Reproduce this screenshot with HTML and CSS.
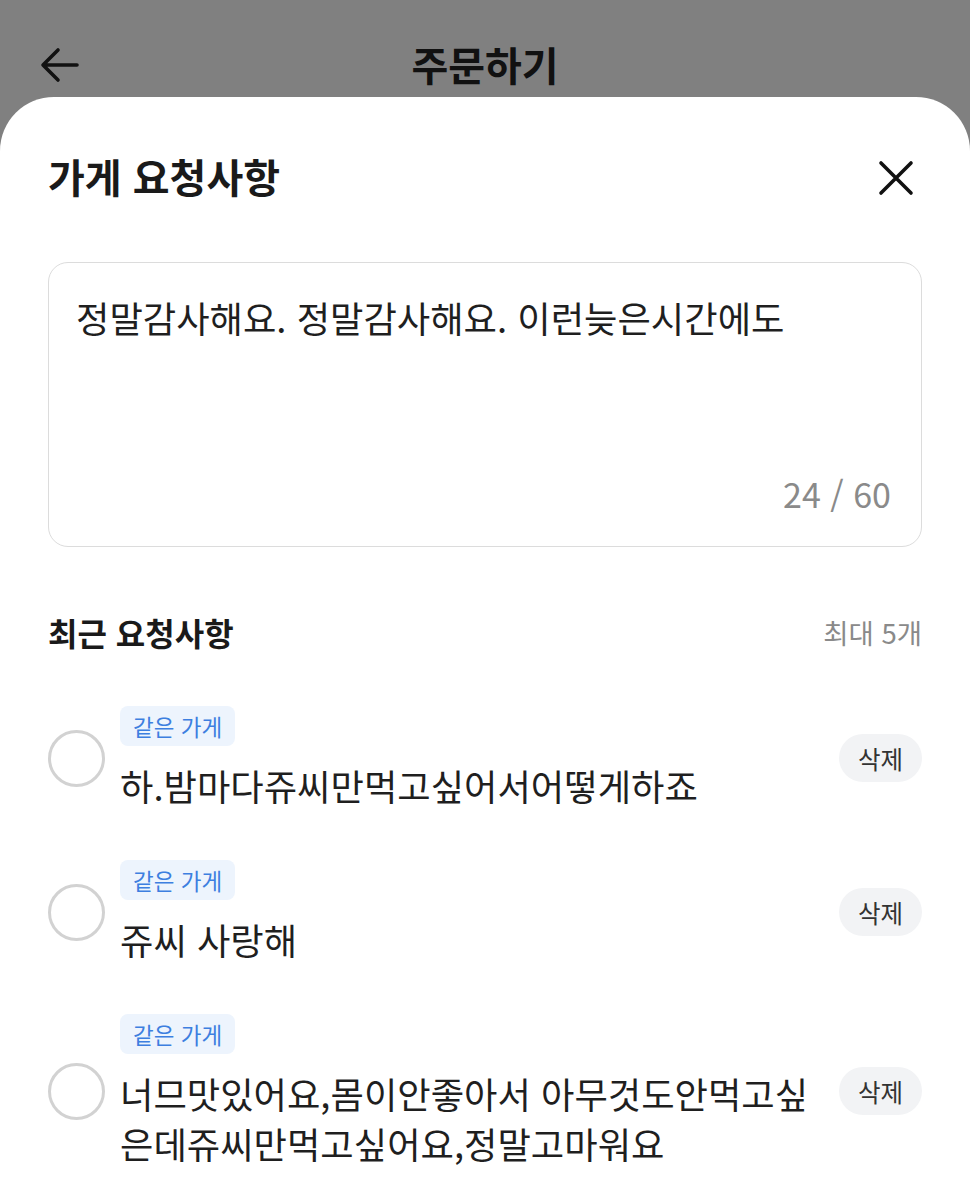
FILE: index.html
```html
<!DOCTYPE html>
<html lang="ko">
<head>
  <meta charset="UTF-8" />
  <meta name="viewport" content="width=device-width, initial-scale=1.0"/>
  <title>주문하기</title>
  <link rel="stylesheet" href="styles.css">
</head>
<body>
  <header class="top-bar">
    <button class="icon-button back">
      <svg width="40" height="36" viewBox="0 0 40 36" fill="none" stroke="#111" stroke-width="3.6" stroke-linecap="round" stroke-linejoin="round">
        <path d="M37 18H4M18 3L3 18l15 15"/>
      </svg>
    </button>
    <h1 class="top-title">주문하기</h1>
    <span></span>
  </header>

  <section class="sheet">
    <div class="sheet-head">
      <h2 class="sheet-title">가게 요청사항</h2>
      <button class="icon-button close">
        <svg width="36" height="36" viewBox="0 0 36 36" fill="none" stroke="#111" stroke-width="3.6" stroke-linecap="round">
          <path d="M3 3l30 30M33 3L3 33"/>
        </svg>
      </button>
    </div>

    <div class="request-box">
      <p class="request-text">정말감사해요. 정말감사해요. 이런늦은시간에도</p>
      <span class="counter">24 / 60</span>
    </div>

    <div class="recent-head">
      <h3 class="recent-title">최근 요청사항</h3>
      <span class="recent-limit">최대 5개</span>
    </div>

    <ul class="recent-list">
      <li class="recent-item">
        <span class="radio"></span>
        <div class="item-body">
          <span class="badge">같은 가게</span>
          <p class="item-text">하.밤마다쥬씨만먹고싶어서어떻게하죠</p>
        </div>
        <button class="delete">삭제</button>
      </li>
      <li class="recent-item">
        <span class="radio"></span>
        <div class="item-body">
          <span class="badge">같은 가게</span>
          <p class="item-text">쥬씨 사랑해</p>
        </div>
        <button class="delete">삭제</button>
      </li>
      <li class="recent-item">
        <span class="radio"></span>
        <div class="item-body">
          <span class="badge">같은 가게</span>
          <p class="item-text">너므맛있어요,몸이안좋아서 아무것도안먹고싶은데쥬씨만먹고싶어요,정말고마워요</p>
        </div>
        <button class="delete">삭제</button>
      </li>
    </ul>
  </section>
</body>
</html>
```

FILE: styles.css
```css
body {
  margin: 0;
  background-color: #808080;
  font-family: 'Noto Sans CJK KR', 'Noto Sans', sans-serif;
  color: #1a1a1a;
}

h1, h2, h3, p, ul {
  margin: 0;
  padding: 0;
}

.icon-button {
  background: none;
  border: none;
  padding: 0;
  display: flex;
  cursor: pointer;
}

.top-bar {
  height: 97px;
  display: grid;
  grid-template-columns: 1fr auto 1fr;
  align-items: center;
  padding: 32px 40px 0 40px;
  box-sizing: border-box;
}

.top-title {
  font-size: 40px;
  font-weight: 700;
  color: #111;
  line-height: 1;
  margin-top: -2px;
}

.sheet {
  background-color: #fff;
  border-radius: 54px 54px 0 0;
  padding: 56px 48px 40px 48px;
  min-height: 1103px;
  box-sizing: border-box;
}

.sheet-head {
  display: flex;
  justify-content: space-between;
  align-items: center;
  height: 50px;
}

.sheet-title {
  font-size: 40px;
  font-weight: 700;
  line-height: 50px;
  margin-top: -4px;
}

.close {
  margin-right: 8px;
}

.request-box {
  margin-top: 59px;
  height: 285px;
  border: 1.5px solid #dcdcdc;
  border-radius: 20px;
  box-sizing: border-box;
  padding: 30px 30px 30px 27px;
  display: flex;
  flex-direction: column;
  justify-content: space-between;
}

.request-text {
  font-size: 36.3px;
  line-height: 48px;
  color: #1f1f1f;
}

.counter {
  align-self: flex-end;
  font-size: 34px;
  line-height: 44px;
  color: #8a8a8a;
}

.recent-head {
  margin-top: 65px;
  display: flex;
  justify-content: space-between;
  align-items: center;
  height: 40px;
}

.recent-title {
  font-size: 32px;
  font-weight: 700;
}

.recent-limit {
  font-size: 27.5px;
  color: #8a8a8a;
}

.recent-list {
  list-style: none;
  margin-top: 54px;
  display: flex;
  flex-direction: column;
  gap: 50px;
}

.recent-item {
  display: flex;
  align-items: center;
  gap: 15px;
}

.radio {
  width: 57px;
  height: 57px;
  border: 3px solid #d2d2d2;
  border-radius: 50%;
  box-sizing: border-box;
  flex-shrink: 0;
}

.item-body {
  flex: 1;
  display: flex;
  flex-direction: column;
  align-items: flex-start;
  gap: 14px;
}

.badge {
  height: 40px;
  line-height: 40px;
  padding: 0 13px;
  font-size: 22.5px;
  color: #3d7fe0;
  background-color: #edf4fd;
  border-radius: 8px;
}

.item-text {
  font-size: 36.3px;
  line-height: 50px;
  color: #1f1f1f;
}

.delete {
  flex-shrink: 0;
  width: 83px;
  height: 48px;
  border: none;
  border-radius: 24px;
  background-color: #f2f3f5;
  font-family: inherit;
  font-size: 24.5px;
  color: #333;
  cursor: pointer;
}
```
